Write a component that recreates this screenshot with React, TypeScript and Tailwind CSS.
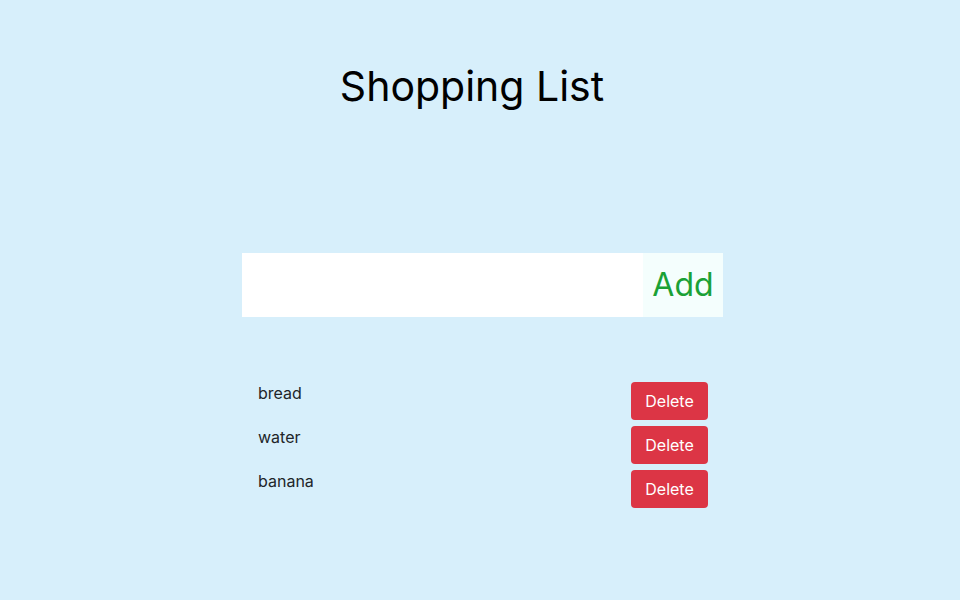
import React from "react";

export default function App() {
  const items = ["bread", "water", "banana"];
  return (
    <div
      className="min-h-[600px] w-full bg-[#d7effb] text-[#212529]"
      style={{ fontFamily: "Inter, 'Noto Sans', sans-serif" }}
    >
      <div className="flex flex-col items-center pt-[60px]">
        <h1 className="mr-[16px] text-[41px] font-normal leading-[52px] text-black">
          Shopping List
        </h1>
        <div className="mt-[141px] ml-[5px] flex h-[64px] w-[481px]">
          <input className="h-full flex-1 bg-white px-3 outline-none" />
          <button className="flex h-full w-[80px] items-center justify-center bg-[#f4fefd] text-[32px] text-[#1aa136]">
            Add
          </button>
        </div>
        <div className="mt-[65px] ml-[5px] flex w-[481px] flex-col gap-[6px] pl-[16px] pr-[15px]">
          {items.map((it) => (
            <div key={it} className="flex items-start justify-between">
              <span className="text-[16px] leading-[22px]">{it}</span>
              <button className="h-[38px] w-[77px] rounded-[4px] bg-[#dc3545] text-[16px] text-white">
                Delete
              </button>
            </div>
          ))}
        </div>
      </div>
    </div>
  );
}
